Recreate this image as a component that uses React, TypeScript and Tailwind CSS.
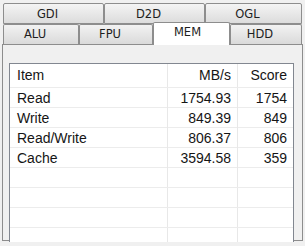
import React from 'react';

const topTabs = [
  { label: 'GDI', w: 'w-[101px]' },
  { label: 'D2D', w: 'w-[101px]' },
  { label: 'OGL', w: 'w-[97px]' },
];

const bottomTabs = [
  { label: 'ALU', w: 'w-[76px]', active: false },
  { label: 'FPU', w: 'w-[74px]', active: false },
  { label: 'MEM', w: 'w-[77px]', active: true },
  { label: 'HDD', w: 'w-[72px]', active: false },
];

const rows = [
  { item: 'Read', mbs: '1754.93', score: '1754' },
  { item: 'Write', mbs: '849.39', score: '849' },
  { item: 'Read/Write', mbs: '806.37', score: '806' },
  { item: 'Cache', mbs: '3594.58', score: '359' },
  { item: '', mbs: '', score: '' },
  { item: '', mbs: '', score: '' },
  { item: '', mbs: '', score: '' },
  { item: '', mbs: '', score: '' },
];

export default function App() {
  return (
    <div className="w-[305px] h-[246px] overflow-hidden bg-[#f0f0f0] pt-[3px] font-['DejaVu_Sans',sans-serif]">
      {/* back row of tabs */}
      <div className="flex pl-[3px] h-[21px]">
        {topTabs.map((t) => (
          <div
            key={t.label}
            className={`${t.w} h-full flex items-center justify-center pr-3 pt-[2px] border border-[#8d8d8d] rounded-t-[2px] bg-gradient-to-b from-[#f4f4f4] to-[#dcdcdc] text-[11.5px] text-[#1e1e1e]`}
          >
            {t.label}
          </div>
        ))}
      </div>

      {/* front row of tabs */}
      <div className="flex items-end pl-[3px] h-[20px]">
        {bottomTabs.map((t) =>
          t.active ? (
            <div
              key={t.label}
              className={`${t.w} relative z-10 h-[23px] -mb-px flex items-center justify-center pr-2 pb-[2px] border border-b-0 border-[#8d8d8d] rounded-t-[2px] bg-white text-[11.5px] text-[#1e1e1e]`}
            >
              {t.label}
            </div>
          ) : (
            <div
              key={t.label}
              className={`${t.w} h-full flex items-center justify-center pr-3 pt-[1px] border border-[#8d8d8d] border-b-0 rounded-t-[2px] bg-gradient-to-b from-[#f2f2f2] to-[#dadada] text-[11.5px] text-[#1e1e1e]`}
            >
              {t.label}
            </div>
          )
        )}
      </div>

      {/* tab page */}
      <div className="ml-[2px] w-[301px] h-[197px] flex flex-col border border-[#8d8d8d] bg-[#f0f0f0] pl-[6px] pr-[6px] pt-[18px]">
        <div className="relative -mb-[2px] flex-1 w-[285px] overflow-hidden border border-b-0 border-[#828790] bg-white font-['Liberation_Sans',Arial,sans-serif] text-[14px] text-[#151515]">
          <div className="grid grid-cols-[157px_70px_56px] h-[24px] border-b border-[#ececec]">
            <div className="flex items-center pl-[7px]">Item</div>
            <div className="flex items-center justify-end pr-[6px] border-l border-[#e8e8e8]">MB/s</div>
            <div className="flex items-center justify-end pr-[6px] border-l border-[#e8e8e8]">Score</div>
          </div>
          {rows.map((r, i) => (
            <div key={i} className="grid grid-cols-[157px_70px_56px] h-[20px] border-b border-[#ececec]">
              <div className="flex items-center pl-[7px]">{r.item}</div>
              <div className="flex items-center justify-end pr-[6px] border-l border-[#e8e8e8]">{r.mbs}</div>
              <div className="flex items-center justify-end pr-[6px] border-l border-[#e8e8e8]">{r.score}</div>
            </div>
          ))}
        </div>
      </div>
    </div>
  );
}
